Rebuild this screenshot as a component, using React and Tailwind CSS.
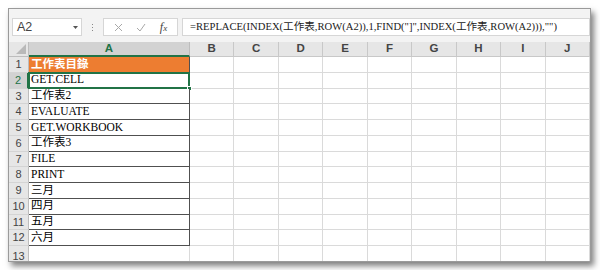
import React from "react";

const cellFont = { fontFamily: '"Liberation Serif", "Noto Sans CJK TC", serif' };
const uiFont = { fontFamily: '"Liberation Sans", "Noto Sans", sans-serif' };

const rows = [
  "工作表目錄",
  "GET.CELL",
  "工作表2",
  "EVALUATE",
  "GET.WORKBOOK",
  "工作表3",
  "FILE",
  "PRINT",
  "三月",
  "四月",
  "五月",
  "六月",
];

const cols = ["B", "C", "D", "E", "F", "G", "H", "I", "J"];

function Row({ n, text }) {
  const isFirst = n === 1;
  const isSel = n === 2;
  return (
    <div className="flex h-[15.75px] shrink-0">
      <div
        className={
          "w-[20px] shrink-0 flex items-center justify-center text-[11px] border-b border-[#d4d4d4] " +
          (isSel
            ? "bg-[#d2d2d2] text-[#217346] border-r-2 border-r-[#217346]"
            : "bg-[#e6e6e6] text-[#444] border-r border-r-[#bdbdbd]")
        }
        style={uiFont}
      >
        {n}
      </div>
      <div
        className={
          "w-[161px] shrink-0 relative flex items-center pl-[2px] text-[11.5px] border-b border-r border-[#505050] " +
          (isFirst ? "bg-[#ed7d31] text-white font-bold" : "bg-white text-black")
        }
        style={cellFont}
      >
        <span className="leading-none">{text}</span>
        {isSel && (
          <>
            <div className="absolute left-[-1px] top-[-1px] right-[-1px] bottom-[-1px] border-2 border-[#217346]" />
            <div className="absolute right-[-3px] bottom-[-3px] w-[5px] h-[5px] bg-[#217346] border border-white" />
          </>
        )}
      </div>
      {cols.map((c) => (
        <div key={c} className="flex-1 bg-white border-r border-b border-[#dadada]" />
      ))}
    </div>
  );
}

export default function App() {
  return (
    <div className="w-[600px] h-[270px] bg-white pt-[8px] pl-[8px]">
      <div className="w-[583px] h-[254px] border border-[#9a9a9a] bg-[#f3f3f3] shadow-[3px_4px_6px_rgba(0,0,0,0.5)] flex flex-col overflow-hidden">
        {/* formula toolbar */}
        <div className="h-[33px] shrink-0 flex items-start pt-[9px] pl-[3px]">
          <div
            className="w-[70px] h-[18px] bg-white border border-[#d6d6d6] flex items-center justify-between pl-[4px] pr-[3px] text-[12.5px] text-[#444]"
            style={uiFont}
          >
            <span>A2</span>
            <svg width="5" height="3" viewBox="0 0 5 3">
              <path d="M0 0h5L2.5 3z" fill="#555" />
            </svg>
          </div>
          <div className="w-[21px] h-[18px] flex flex-col items-center justify-center gap-[2px]">
            <div className="w-[1px] h-[1px] bg-[#888]" />
            <div className="w-[1px] h-[1px] bg-[#888]" />
            <div className="w-[1px] h-[1px] bg-[#888]" />
          </div>
          <div className="w-[75px] h-[18px] bg-white border border-[#d6d6d6] flex items-center justify-around px-[3px]">
            <svg width="9" height="9" viewBox="0 0 9 9">
              <path d="M1 1L8 8M8 1L1 8" stroke="#a8a8a8" strokeWidth="1" />
            </svg>
            <svg width="10" height="9" viewBox="0 0 10 9">
              <path d="M1 5L4 8L9 1" stroke="#a8a8a8" strokeWidth="1" fill="none" />
            </svg>
            <span className="text-[12px] italic text-[#444] leading-none" style={cellFont}>
              f<span className="text-[9px]">x</span>
            </span>
          </div>
          <div
            className="ml-[4px] flex-1 h-[18px] bg-white border border-[#d6d6d6] flex items-center pl-[7px] text-[10.6px] text-[#222] whitespace-nowrap overflow-hidden"
            style={cellFont}
          >
            =REPLACE(INDEX(工作表,ROW(A2)),1,FIND("]",INDEX(工作表,ROW(A2))),"")
          </div>
        </div>

        {/* column header */}
        <div className="flex h-[15px] shrink-0">
          <div className="w-[20px] shrink-0 bg-[#e6e6e6] border-r border-b border-[#bdbdbd] relative">
            <svg className="absolute right-[2px] bottom-[2px]" width="10" height="10" viewBox="0 0 10 10">
              <path d="M10 0V10H0z" fill="#b9b9b9" />
            </svg>
          </div>
          <div
            className="w-[161px] shrink-0 bg-[#d2d2d2] border-r border-[#bdbdbd] border-b-2 border-b-[#217346] flex items-center justify-center text-[11.5px] text-[#217346] font-bold"
            style={uiFont}
          >
            A
          </div>
          {cols.map((c) => (
            <div
              key={c}
              className="flex-1 bg-[#e6e6e6] border-r border-b border-[#c8c8c8] flex items-center justify-center text-[11.5px] text-[#444] font-bold"
              style={uiFont}
            >
              {c}
            </div>
          ))}
        </div>

        {rows.map((t, i) => (
          <Row key={i} n={i + 1} text={t} />
        ))}

        <div className="flex flex-1">
          <div
            className="w-[20px] shrink-0 bg-[#e6e6e6] border-r border-[#bdbdbd] flex items-start pt-[2px] justify-center text-[11px] text-[#444]"
            style={uiFont}
          >
            13
          </div>
          <div className="w-[161px] shrink-0 bg-white border-r border-[#dadada]" />
          {cols.map((c) => (
            <div key={c} className="flex-1 bg-white border-r border-[#dadada]" />
          ))}
        </div>
      </div>
    </div>
  );
}
